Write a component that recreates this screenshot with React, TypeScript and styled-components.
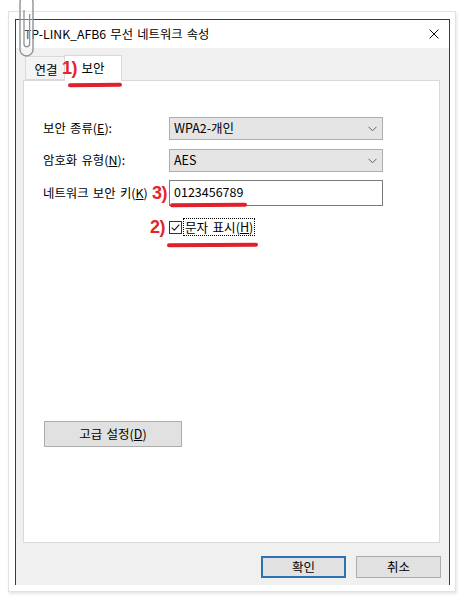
import React from 'react';
import styled, { createGlobalStyle } from 'styled-components';

const Global = createGlobalStyle`
  html, body { margin: 0; padding: 0; background: #ffffff; }
  body {
    width: 464px; height: 604px; overflow: hidden;
    font-family: "Noto Sans CJK KR", "Noto Sans", sans-serif;
    font-size: 12.5px; color: #000;
    word-spacing: 1.5px;
  }
  * { box-sizing: border-box; }
`;

const Stage = styled.div`
  position: relative;
  width: 464px;
  height: 604px;
  padding: 11px 0 0 8px;
`;

const Paper = styled.div`
  width: 448px;
  height: 581px;
  background: #fff;
  border: 1px solid #e2e2e2;
  box-shadow: 1px 2px 3px rgba(0, 0, 0, 0.1);
  padding: 7px 0 0 6px;
`;

const Window = styled.div`
  width: 435px;
  height: 566px;
  border: 1px solid #2c3d4e;
  border-bottom: none;
  display: flex;
  flex-direction: column;
  background: #f0f0f0;
`;

const TitleBar = styled.div`
  height: 28px;
  flex: none;
  background: #fff;
  display: flex;
  align-items: center;
  padding: 0 10px 0 8px;
`;

const Title = styled.div`
  flex: 1;
  font-size: 12.3px;
  line-height: 1;
  padding-top: 1px;
`;

const CloseIcon = styled.svg`
  width: 10px;
  height: 10px;
  display: block;
`;

const Body = styled.div`
  flex: 1;
  display: flex;
  flex-direction: column;
  padding: 0 9px 7px 7px;
`;

const TabRow = styled.div`
  height: 33px;
  flex: none;
  display: flex;
  align-items: flex-end;
  padding-left: 2px;
  position: relative;
  z-index: 1;
`;

const Tab = styled.div<{ $active?: boolean }>`
  display: flex;
  justify-content: center;
  align-items: center;
  font-size: 12.5px;
  line-height: 1;
  border: 1px solid #d9d9d9;
  ${(p) =>
    p.$active
      ? `
    width: 58px; height: 26px; margin-left: -2px;
    background: #fff; border-bottom: none; padding-bottom: 1px;
  `
      : `
    width: 41px; height: 24px; margin-bottom: 1px;
    background: #f4f4f4; border-right: none; padding-top: 5px;
  `}
`;

const Panel = styled.div`
  height: 463px;
  flex: none;
  margin-top: -1px;
  background: #fff;
  border: 1px solid #d9d9d9;
  display: flex;
  flex-direction: column;
  padding: 36px 0 0 19px;
`;

const Form = styled.div`
  display: flex;
  flex-direction: column;
`;

const Row = styled.div<{ $gap: number; $h: number }>`
  display: flex;
  align-items: center;
  margin-top: ${(p) => p.$gap}px;
  height: ${(p) => p.$h}px;
`;

const Label = styled.div`
  width: 126px;
  flex: none;
  font-size: 12.4px;
  line-height: 1;
`;

const Combo = styled.div`
  width: 214px;
  height: 100%;
  background: #e5e5e5;
  border: 1px solid #adadad;
  display: flex;
  align-items: center;
  justify-content: space-between;
  padding: 0 5px 0 4px;
  font-size: 12.5px;
  line-height: 1;
`;

const Chevron = styled.svg`
  width: 9px;
  height: 6px;
  display: block;
`;

const TextBox = styled.div`
  width: 214px;
  height: 100%;
  background: #fff;
  border: 1px solid #7a7a7a;
  display: flex;
  align-items: center;
  padding: 0 4px 2px;
  font-size: 12.5px;
  line-height: 1;
`;

const CheckRow = styled.div`
  display: flex;
  align-items: center;
  margin-left: 126px;
`;

const CheckBox = styled.div`
  width: 13px;
  height: 13px;
  border: 1px solid #333;
  background: #fff;
  display: flex;
  align-items: center;
  justify-content: center;
`;

const CheckLabel = styled.div`
  margin-left: 1px;
  border: 1px dotted #000;
  padding: 2px 1px 2px 1px;
  font-size: 12.6px;
  line-height: 1;
  height: 18px;
  display: flex;
  align-items: center;
`;

const Button = styled.div<{ $primary?: boolean; $w: number; $h: number }>`
  width: ${(p) => p.$w}px;
  height: ${(p) => p.$h}px;
  background: #e1e1e1;
  border: ${(p) => (p.$primary ? '2px solid #2a72b2' : '1px solid #adadad')};
  display: flex;
  align-items: center;
  justify-content: center;
  font-size: 12.5px;
  line-height: 1;
  flex: none;
`;

const AdvancedWrap = styled.div`
  margin-top: 185px;
  margin-left: 1px;
`;

const ButtonRow = styled.div`
  margin-top: 13px;
  margin-right: -1px;
  display: flex;
  justify-content: flex-end;
  gap: 10px;
`;

const Mark = styled.div<{ $x: number; $y: number }>`
  position: absolute;
  z-index: 3;
  left: ${(p) => p.$x}px;
  top: ${(p) => p.$y}px;
  font-family: "Liberation Sans", Arial, sans-serif;
  font-weight: bold;
  font-size: 18px;
  line-height: 18px;
  color: #e3242b;
  letter-spacing: -0.5px;
`;

const Stroke = styled.div<{ $x: number; $y: number; $w: number }>`
  position: absolute;
  z-index: 3;
  left: ${(p) => p.$x}px;
  top: ${(p) => p.$y}px;
  width: ${(p) => p.$w}px;
  height: 4px;
  border-radius: 2px;
  background: #e0202a;
  transform: rotate(-0.4deg);
`;

const Clip = styled.svg`
  position: absolute;
  z-index: 3;
  left: 17px;
  top: 0;
  width: 20px;
  height: 60px;
`;

export default function App() {
  return (
    <>
      <Global />
      <Stage>
        <Paper>
          <Window>
            <TitleBar>
              <Title>TP-LINK_AFB6 무선 네트워크 속성</Title>
              <CloseIcon viewBox="0 0 10 10">
                <path d="M0.5 0.5 L9.5 9.5 M9.5 0.5 L0.5 9.5" stroke="#111" strokeWidth="1" fill="none" />
              </CloseIcon>
            </TitleBar>
            <Body>
              <TabRow>
                <Tab>연결</Tab>
                <Tab $active>보안</Tab>
              </TabRow>
              <Panel>
                <Form>
                  <Row $gap={0} $h={23}>
                    <Label>
                      보안 종류(<u>E</u>):
                    </Label>
                    <Combo>
                      <span>WPA2-개인</span>
                      <Chevron viewBox="0 0 9 6">
                        <path d="M0.5 0.8 L4.5 4.8 L8.5 0.8" stroke="#606060" strokeWidth="1" fill="none" />
                      </Chevron>
                    </Combo>
                  </Row>
                  <Row $gap={9} $h={23}>
                    <Label>
                      암호화 유형(<u>N</u>):
                    </Label>
                    <Combo>
                      <span>AES</span>
                      <Chevron viewBox="0 0 9 6">
                        <path d="M0.5 0.8 L4.5 4.8 L8.5 0.8" stroke="#606060" strokeWidth="1" fill="none" />
                      </Chevron>
                    </Combo>
                  </Row>
                  <Row $gap={8} $h={26}>
                    <Label>
                      네트워크 보안 키(<u>K</u>)
                    </Label>
                    <TextBox>0123456789</TextBox>
                  </Row>
                  <Row $gap={12} $h={18}>
                    <CheckRow>
                      <CheckBox>
                        <svg width="11" height="11" viewBox="0 0 11 11">
                          <path d="M1.8 5.6 L4.3 8.1 L9.3 2.6" stroke="#222" strokeWidth="1.2" fill="none" />
                        </svg>
                      </CheckBox>
                      <CheckLabel>
                        문자 표시(<u>H</u>)
                      </CheckLabel>
                    </CheckRow>
                  </Row>
                </Form>
                <AdvancedWrap>
                  <Button $w={138} $h={26}>
                    고급 설정(<u>D</u>)
                  </Button>
                </AdvancedWrap>
              </Panel>
              <ButtonRow>
                <Button $primary $w={85} $h={22}>
                  확인
                </Button>
                <Button $w={85} $h={22}>
                  취소
                </Button>
              </ButtonRow>
            </Body>
          </Window>
        </Paper>

        <Clip viewBox="0 0 20 60">
          <rect x="3" y="-4" width="13" height="60" rx="6.5" fill="rgba(255,255,255,0.3)" stroke="#8f9397" strokeWidth="1.4" />
          <path d="M7 10 L7 44 A2.8 2.8 0 0 0 12.6 44 L12.6 14" fill="none" stroke="#8f9397" strokeWidth="1.3" />
        </Clip>

        <Mark $x={62} $y={59}>1)</Mark>
        <Mark $x={152} $y={184}>3)</Mark>
        <Mark $x={150} $y={218}>2)</Mark>
        <Stroke $x={68} $y={83} $w={54} />
        <Stroke $x={170} $y={203} $w={77} />
        <Stroke $x={167} $y={243} $w={91} />
      </Stage>
    </>
  );
}
